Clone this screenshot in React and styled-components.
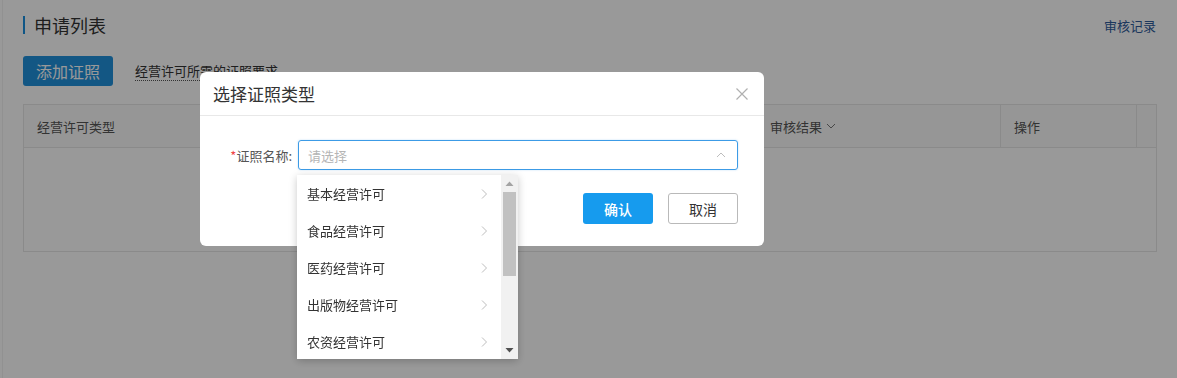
import React from 'react';
import styled, { createGlobalStyle } from 'styled-components';

const GlobalStyle = createGlobalStyle`
  html, body {
    margin: 0;
    padding: 0;
    background: #fff;
  }
  body {
    font-family: "Noto Sans CJK SC", "Noto Sans", "Liberation Sans", sans-serif;
    color: #333;
  }
  * { box-sizing: border-box; }
`;

const Page = styled.div`
  width: 1175px;
  height: 378px;
  margin-left: 2px;
  border-left: 1px solid #f2f2f2;
  padding: 12px 21px 0 20px;
  overflow: hidden;
`;

const TitleBar = styled.div`
  display: flex;
  align-items: center;
  justify-content: space-between;
  height: 26px;
`;

const Title = styled.h2`
  margin: 0;
  font-size: 18px;
  font-weight: 400;
  line-height: 26px;
  color: #333;
  border-left: 2px solid #1a8fe0;
  padding-left: 9px;
  height: 18px;
  display: flex;
  align-items: center;
`;

const TextLink = styled.a`
  font-size: 13px;
  color: #305c9c;
  text-decoration: none;
`;

const Toolbar = styled.div`
  display: flex;
  align-items: center;
  gap: 22px;
  margin-top: 18px;
`;

const PrimaryButton = styled.button`
  width: 90px;
  height: 30px;
  border: none;
  border-radius: 3px;
  background: #2091dc;
  color: #fff;
  font-family: inherit;
  font-size: ${p => (p.small ? '14px' : '16px')};
  font-weight: ${p => (p.small ? 500 : 400)};
  padding: 0;
  cursor: pointer;
`;

const DottedLink = styled.span`
  font-size: 13px;
  color: #333;
  border-bottom: 1px dotted #555;
  line-height: 18px;
`;

const Table = styled.div`
  margin-top: 18px;
  width: 1134px;
  border: 1px solid #e6e6e6;
  height: 148px;
`;

const HeadRow = styled.div`
  display: grid;
  grid-template-columns: 270px 240px 223px 244px 136px 1fr;
  height: 43px;
  border-bottom: 1px solid #e6e6e6;
  background: #fbfbfb;
`;

const HeadCell = styled.div`
  display: flex;
  align-items: center;
  gap: 4px;
  padding-left: 13px;
  font-size: 13px;
  color: #555;
  border-right: ${p => (p.last ? 'none' : '1px solid #e6e6e6')};
`;

const Overlay = styled.div`
  position: fixed;
  inset: 0;
  background: rgba(0, 0, 0, 0.4);
`;

const Modal = styled.div`
  position: absolute;
  left: 200px;
  top: 72px;
  width: 564px;
  height: 174px;
  background: #fff;
  border-radius: 6px;
`;

const ModalHeader = styled.div`
  height: 44px;
  display: flex;
  align-items: center;
  justify-content: space-between;
  padding: 0 15px 0 13px;
  border-bottom: 1px solid #e8e8e8;
`;

const ModalTitle = styled.div`
  font-size: 17px;
  color: #333;
`;

const CloseButton = styled.span`
  display: flex;
  width: 14px;
  height: 14px;
  cursor: pointer;
`;

const ModalBody = styled.div`
  padding: 24px 26px 0 26px;
`;

const FormRow = styled.div`
  display: flex;
  align-items: center;
  gap: 6px;
`;

const Label = styled.label`
  font-size: 13px;
  color: #555;
  width: 66px;
  text-align: right;
  white-space: nowrap;
  span { color: #f04545; }
`;

const SelectWrap = styled.div`
  position: relative;
  flex: 1;
`;

const SelectBox = styled.div`
  height: 30px;
  border: 1px solid #3c9be6;
  border-radius: 3px;
  box-shadow: 0 0 2px rgba(60, 155, 230, 0.35);
  display: flex;
  align-items: center;
  justify-content: space-between;
  padding: 0 11px 0 9px;
  font-size: 13px;
  color: #b5b5b5;
`;

const Dropdown = styled.div`
  position: absolute;
  left: -1px;
  top: 35px;
  width: 221px;
  height: 184px;
  background: #fff;
  box-shadow: 0 2px 8px rgba(0, 0, 0, 0.22);
  display: flex;
  z-index: 2;
`;

const OptionList = styled.ul`
  list-style: none;
  margin: 0;
  padding: 0;
  flex: 1;
  overflow: hidden;
`;

const Option = styled.li`
  height: 37px;
  display: flex;
  align-items: center;
  justify-content: space-between;
  padding: 0 12px 0 10px;
  font-size: 13px;
  color: #333;
  cursor: pointer;
`;

const ScrollTrack = styled.div`
  width: 17px;
  background: #f1f1f1;
  display: flex;
  flex-direction: column;
  align-items: center;
`;

const ScrollArrow = styled.div`
  height: 17px;
  display: flex;
  align-items: center;
  justify-content: center;
`;

const ScrollThumb = styled.div`
  width: 13px;
  height: 84px;
  background: #c1c1c1;
`;

const Spacer = styled.div`
  flex: 1;
`;

const Footer = styled.div`
  display: flex;
  justify-content: flex-end;
  gap: 15px;
  margin-top: 23px;
`;

const GhostButton = styled.button`
  width: 70px;
  height: 31px;
  border: 1px solid #b9b9b9;
  border-radius: 3px;
  background: #fff;
  color: #333;
  font-family: inherit;
  font-size: 14px;
  padding: 0;
  cursor: pointer;
`;

const ConfirmButton = styled(PrimaryButton)`
  width: 70px;
  height: 31px;
  background: #169bee;
`;

const Chevron = ({ dir = 'right', color = '#bdbdbd', size = 10 }) => {
  const paths = {
    right: 'M3 0.5 L7.5 5 L3 9.5',
    up: 'M1 7 L5 3 L9 7',
    down: 'M1 3 L5 7 L9 3',
  };
  return (
    <svg width={size} height={size} viewBox="0 0 10 10">
      <path d={paths[dir]} fill="none" stroke={color} strokeWidth="1" />
    </svg>
  );
};

const Triangle = ({ up }) => (
  <svg width="9" height="5" viewBox="0 0 9 5">
    <path d={up ? 'M0.5 5 L4.5 0.5 L8.5 5 Z' : 'M0.5 0 L4.5 4.5 L8.5 0 Z'} fill={up ? '#a3a3a3' : '#505050'} />
  </svg>
);

const options = ['基本经营许可', '食品经营许可', '医药经营许可', '出版物经营许可', '农资经营许可'];

const columns = ['经营许可类型', '证照名称', '申请时间', '审核结果', '操作', ''];

export default function App() {
  return (
    <>
      <GlobalStyle />
      <Page>
        <TitleBar>
          <Title>申请列表</Title>
          <TextLink>审核记录</TextLink>
        </TitleBar>
        <Toolbar>
          <PrimaryButton>添加证照</PrimaryButton>
          <DottedLink>经营许可所需的证照要求</DottedLink>
        </Toolbar>
        <Table>
          <HeadRow>
            {columns.map((c, i) => (
              <HeadCell key={i} last={i === columns.length - 1}>
                {c}
                {c === '审核结果' && <Chevron dir="down" color="#777" size={10} />}
              </HeadCell>
            ))}
          </HeadRow>
        </Table>
      </Page>

      <Overlay>
        <Modal>
          <ModalHeader>
            <ModalTitle>选择证照类型</ModalTitle>
            <CloseButton>
              <svg width="14" height="14" viewBox="0 0 14 14">
                <path d="M1.5 1.5 L12.5 12.5 M12.5 1.5 L1.5 12.5" stroke="#b0b0b0" strokeWidth="1.2" />
              </svg>
            </CloseButton>
          </ModalHeader>
          <ModalBody>
            <FormRow>
              <Label><span>*</span>证照名称:</Label>
              <SelectWrap>
                <SelectBox>
                  请选择
                  <Chevron dir="up" />
                </SelectBox>
                <Dropdown>
                  <OptionList>
                    {options.map(o => (
                      <Option key={o}>
                        {o}
                        <Chevron />
                      </Option>
                    ))}
                  </OptionList>
                  <ScrollTrack>
                    <ScrollArrow><Triangle up /></ScrollArrow>
                    <ScrollThumb />
                    <Spacer />
                    <ScrollArrow><Triangle /></ScrollArrow>
                  </ScrollTrack>
                </Dropdown>
              </SelectWrap>
            </FormRow>
            <Footer>
              <ConfirmButton small>确认</ConfirmButton>
              <GhostButton>取消</GhostButton>
            </Footer>
          </ModalBody>
        </Modal>
      </Overlay>
    </>
  );
}
